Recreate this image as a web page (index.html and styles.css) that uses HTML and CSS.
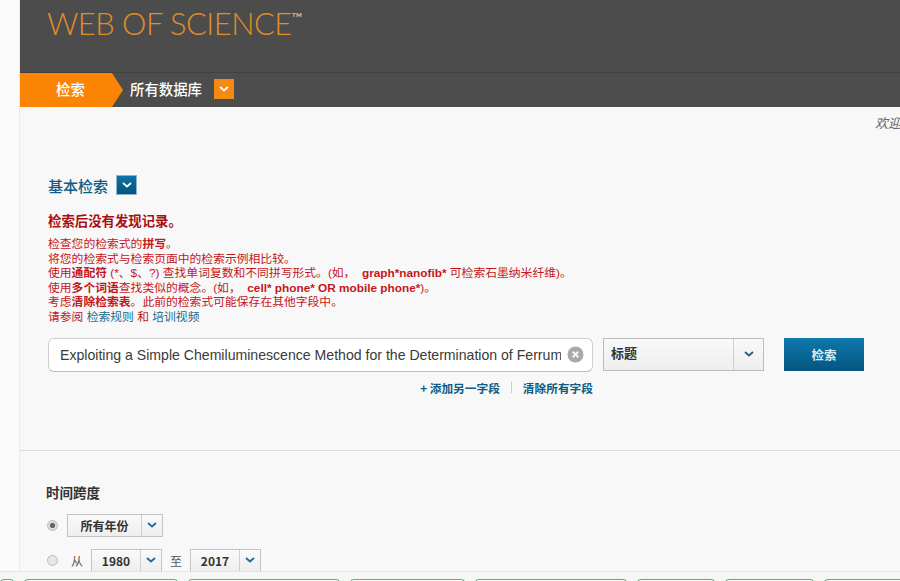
FILE: index.html
```html
<!DOCTYPE html>
<html lang="zh-CN">

<head>
  <meta charset="UTF-8">
  <title>Web of Science</title>
  <link rel="stylesheet" href="styles.css">
</head>

<body>
  <div class="page">
    <div class="gutter"></div>
    <div class="main">
      <div class="brand">WEB OF SCIENCE<sup>™</sup></div>
      <div class="nav">
        <div class="nav-tab">检索</div>
        <div class="nav-db">所有数据库</div>
        <div class="chev-box orange">
          <svg width="10" height="6" viewBox="0 0 10 6"><path d="M1 1l4 3.5L9 1" fill="none" stroke="#fff" stroke-width="1.8"/></svg>
        </div>
      </div>

      <div class="welcome">欢迎</div>

      <div class="search-block">
        <div class="block-title">
          基本检索
          <div class="chev-box blue">
            <svg width="10" height="6" viewBox="0 0 10 6"><path d="M1 1l4 3.5L9 1" fill="none" stroke="#fff" stroke-width="1.8"/></svg>
          </div>
        </div>

        <div class="msg">
          <h4>检索后没有发现记录。</h4>
          <p>检查您的检索式的<b>拼写</b>。</p>
          <p>将您的检索式与检索页面中的检索示例相比较。</p>
          <p>使用<b>通配符</b> (*、$、?) 查找单词复数和不同拼写形式。(如， &nbsp;<b>graph*nanofib*</b> 可检索石墨纳米纤维)。</p>
          <p>使用<b>多个词语</b>查找类似的概念。(如， &nbsp;<b>cell* phone* OR mobile phone*</b>)。</p>
          <p>考虑<b>清除检索表</b>。此前的检索式可能保存在其他字段中。</p>
          <p>请参阅 <a href="#">检索规则</a> 和 <a href="#">培训视频</a></p>
        </div>

        <div class="search-row">
          <div class="search-input">
            <span class="search-text">Exploiting a Simple Chemiluminescence Method for the Determination of Ferrum</span>
            <svg class="clear" width="17" height="17" viewBox="0 0 17 17">
              <circle cx="8.5" cy="8.5" r="8" fill="#a9a9a9"/>
              <path d="M5.8 5.8l5.4 5.4M11.2 5.8l-5.4 5.4" stroke="#f4f4f4" stroke-width="2"/>
            </svg>
          </div>
          <div class="field-select">
            <span class="field-label">标题</span>
            <span class="field-arrow">
              <svg width="10" height="6" viewBox="0 0 10 6"><path d="M1 1l4 3.5L9 1" fill="none" stroke="#1f5f85" stroke-width="1.8"/></svg>
            </span>
          </div>
          <button class="search-btn">检索</button>
        </div>

        <div class="search-links">
          <a href="#">+ 添加另一字段</a>
          <span class="sep"></span>
          <a href="#">清除所有字段</a>
        </div>
      </div>

      <div class="time-block">
        <div class="time-title">时间跨度</div>
        <div class="time-row first">
          <span class="radio checked"></span>
          <div class="mini-select wide">
            <span class="mini-label">所有年份</span>
            <span class="mini-arrow"><svg width="10" height="6" viewBox="0 0 10 6"><path d="M1 1l4 3.5L9 1" fill="none" stroke="#1f6f9c" stroke-width="2"/></svg></span>
          </div>
        </div>
        <div class="time-row">
          <span class="radio"></span>
          <span class="time-word">从</span>
          <div class="mini-select">
            <span class="mini-label">1980</span>
            <span class="mini-arrow"><svg width="10" height="6" viewBox="0 0 10 6"><path d="M1 1l4 3.5L9 1" fill="none" stroke="#1f6f9c" stroke-width="2"/></svg></span>
          </div>
          <span class="time-word">至</span>
          <div class="mini-select">
            <span class="mini-label">2017</span>
            <span class="mini-arrow"><svg width="10" height="6" viewBox="0 0 10 6"><path d="M1 1l4 3.5L9 1" fill="none" stroke="#1f6f9c" stroke-width="2"/></svg></span>
          </div>
        </div>
      </div>
    </div>
  </div>

  <div class="taskbar">
    <div class="task" style="width: 14px"></div>
    <div class="task" style="width: 154px"></div>
    <div class="task" style="width: 152px"></div>
    <div class="task" style="width: 115px"></div>
    <div class="task" style="width: 152px"></div>
    <div class="task" style="width: 78px"></div>
    <div class="task" style="width: 89px"></div>
    <div class="task" style="width: 90px"></div>
  </div>
</body>

</html>
```

FILE: styles.css
```css
* {
  margin: 0;
  padding: 0;
  box-sizing: border-box;
}

html,
body {
  height: 100%;
  overflow: hidden;
}

body {
  background-color: #f8f8f8;
  font-family: "Liberation Sans", "Noto Sans CJK SC", sans-serif;
  color: #333;
}

a {
  text-decoration: none;
}

.page {
  display: flex;
  height: 581px;
}

.gutter {
  width: 20px;
  background-color: #fbfbfb;
  border-right: 1px solid #ececec;
}

.main {
  flex: 1;
  min-width: 0;
  overflow: hidden;
}

/* top bar */
.brand {
  height: 73px;
  padding: 4px 0 0 27px;
  background-color: #4c4c4c;
  border-bottom: 1px solid #414141;
  color: #e08e26;
  font-family: Lato, sans-serif;
  font-weight: 300;
  font-size: 30.8px;
  line-height: 40px;
  letter-spacing: -0.5px;
}

.brand sup {
  font-size: 14px;
  font-weight: 400;
  line-height: 0;
  vertical-align: 12px;
  color: #d8c4a6;
}

.nav {
  height: 34px;
  display: flex;
  align-items: center;
  background-color: #4d4d4d;
  color: #fff;
  font-family: "Noto Sans CJK SC", sans-serif;
  font-size: 14.4px;
  font-weight: 500;
}

.nav-tab {
  width: 103px;
  height: 100%;
  padding: 0 2px 3px 0;
  display: flex;
  align-items: center;
  justify-content: center;
  background-color: #fb8404;
  clip-path: polygon(0 0, 92px 0, 103px 50%, 92px 100%, 0 100%);
}

.nav-db {
  margin: 0 0 3px 7px;
}

.chev-box {
  display: flex;
  align-items: center;
  justify-content: center;
}

.chev-box.orange {
  width: 20px;
  height: 20px;
  margin: 0 0 3px 12px;
  background-color: #f58a12;
}

.chev-box.blue {
  width: 21px;
  height: 20px;
  background: linear-gradient(#0f71a5, #04557f);
  border: 1px solid #8fb4c9;
}

.welcome {
  height: 17px;
  margin-top: 7px;
  margin-right: -1px;
  text-align: right;
  color: #666;
  font-family: "Noto Sans CJK SC", sans-serif;
  font-size: 13px;
  font-style: italic;
  line-height: 17px;
}

/* basic search */
.search-block {
  height: 320px;
  padding: 44px 0 0 28px;
  border-bottom: 1px solid #dcdcdc;
}

.block-title {
  display: flex;
  align-items: center;
  gap: 8px;
  height: 20px;
  color: #0c5c84;
  font-family: "Noto Sans CJK SC", sans-serif;
  font-size: 15px;
  font-weight: 500;
}

.msg {
  margin-top: 20px;
  color: #c4161c;
  font-family: "Liberation Sans", "Noto Sans CJK SC", sans-serif;
  font-size: 11.8px;
  line-height: 14.6px;
}

.msg h4 {
  height: 22px;
  color: #a80f14;
  font-size: 13.4px;
  line-height: 14px;
  font-weight: 700;
}

.msg b {
  font-weight: 700;
}

.msg a {
  color: #1b6a8e;
}

.search-row {
  display: flex;
  margin-top: 13px;
  height: 34px;
}

.search-input {
  width: 545px;
  height: 34px;
  display: flex;
  align-items: center;
  padding: 0 8px 0 11px;
  background-color: #fff;
  border: 1px solid #cfcfcf;
  border-bottom-color: #bdbdbd;
  border-radius: 6px;
}

.search-text {
  flex: 1;
  overflow: hidden;
  white-space: nowrap;
  font-size: 14.1px;
  color: #3a3a3a;
}

.clear {
  margin-left: 6px;
  flex: none;
}

.field-select {
  width: 161px;
  height: 33px;
  margin-left: 10px;
  display: flex;
  background: linear-gradient(#f9f9f9, #eeeeee);
  border: 1px solid #bcbcbc;
}

.field-label {
  flex: 1;
  padding-left: 7px;
  color: #333;
  font-family: "Noto Sans CJK SC", sans-serif;
  font-size: 13px;
  font-weight: 700;
  line-height: 28px;
}

.field-arrow {
  width: 30px;
  display: flex;
  align-items: center;
  justify-content: center;
  border-left: 1px solid #cfcfcf;
}

.search-btn {
  width: 80px;
  height: 33px;
  margin-left: 20px;
  border: 0;
  background: linear-gradient(#0f78ad, #04557f);
  color: #dfeaf0;
  font-family: "Noto Sans CJK SC", sans-serif;
  font-size: 12.5px;
  font-weight: 700;
}

.search-links {
  width: 545px;
  margin-top: 8px;
  display: flex;
  justify-content: flex-end;
  align-items: center;
  gap: 11px;
  font-family: "Noto Sans CJK SC", sans-serif;
  font-size: 11.7px;
  font-weight: 700;
  line-height: 16px;
}

.search-links a {
  color: #0c5c84;
}

.sep {
  width: 1px;
  height: 11px;
  background-color: #ccc;
}

/* timespan */
.time-block {
  padding: 33px 0 0 26px;
}

.time-title {
  height: 18px;
  color: #333;
  font-family: "Noto Sans CJK SC", sans-serif;
  font-size: 13.5px;
  font-weight: 700;
  line-height: 17px;
}

.time-row {
  display: flex;
  align-items: center;
  height: 24px;
  margin-top: 11px;
  font-family: "Noto Sans CJK SC", sans-serif;
  font-size: 12px;
  color: #555;
}

.time-row.first {
  margin-top: 11px;
}

.radio {
  width: 11px;
  height: 11px;
  border: 1px solid #bbb;
  border-radius: 50%;
  background-color: #e6e6e6;
  margin-left: 1px;
}

.radio.checked {
  background: radial-gradient(circle, #666 0, #666 2.2px, #ddd 3px);
}

.time-word {
  margin: 0 8px 0 13px;
}

.mini-select + .time-word {
  margin: 0 8px;
}

.mini-select {
  display: flex;
  width: 71px;
  height: 23px;
  background: linear-gradient(#fafafa, #eee);
  border: 1px solid #c4c4c4;
}

.mini-select.wide {
  width: 96px;
  margin-left: 9px;
}

.mini-label {
  flex: 1;
  text-align: center;
  color: #333;
  font-size: 12px;
  font-weight: 700;
  line-height: 21px;
}

.mini-arrow {
  width: 21px;
  display: flex;
  align-items: center;
  justify-content: center;
  border-left: 1px solid #cfcfcf;
}

/* strip of tabs from the window below, cut off at the bottom */
.taskbar {
  position: fixed;
  left: 0;
  right: 0;
  bottom: 0;
  height: 10px;
  display: flex;
  align-items: flex-start;
  gap: 10px;
  padding-top: 7px;
  background-color: #f5f7f5;
  border-top: 1px solid #e4e4e4;
  overflow: hidden;
}

.task {
  flex: none;
  height: 8px;
  border: 1px solid #5fae80;
  border-bottom: 0;
  border-radius: 4px 4px 0 0;
  background-color: #f3faf5;
}
```
